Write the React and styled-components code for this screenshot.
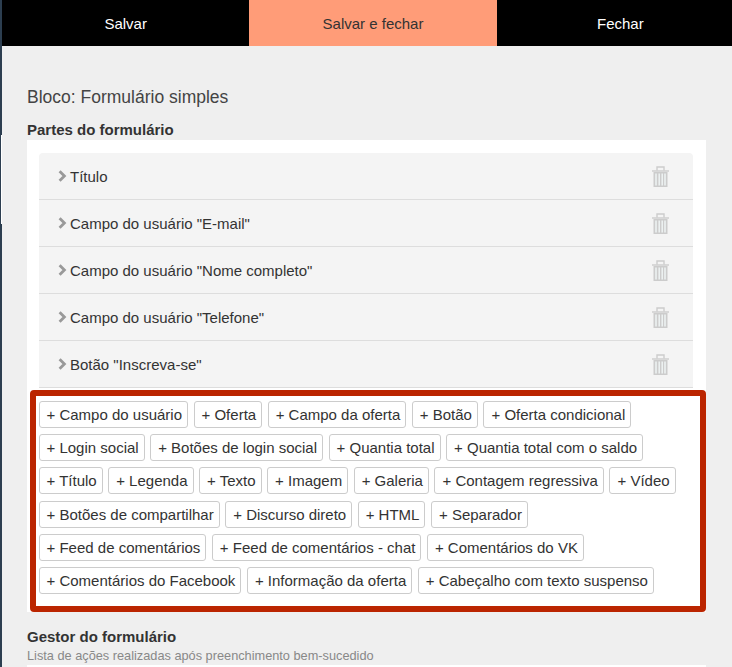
import React from "react";
import styled, { createGlobalStyle } from "styled-components";

const Global = createGlobalStyle`
  html, body { margin: 0; padding: 0; background: #2c3e50; }
  body { font-family: "Liberation Sans", Arial, sans-serif; color: #333; }
  * { box-sizing: border-box; }
`;

const Page = styled.div`
  height: 667px;
  margin-left: 2px;
  width: 730px;
  background: #efefef;
  overflow: hidden;
`;

const EdgeSliver = styled.div`
  position: absolute;
  left: 1px;
  top: 135px;
  width: 1px;
  height: 89px;
  background: #fff;
`;

const TopBar = styled.div`
  display: flex;
  height: 46px;
`;

const TopButton = styled.div`
  flex: 0 0 247.33px;
  display: flex;
  align-items: center;
  justify-content: center;
  font-size: 15px;
  background: ${(p) => (p.$active ? "#ff9c78" : "#000")};
  color: ${(p) => (p.$active ? "#333" : "#fff")};
`;

const Content = styled.div`
  padding: 40px 25px 0;
`;

const Title = styled.h1`
  margin: 0;
  font-size: 17.5px;
  line-height: 22px;
  font-weight: 400;
  color: #444;
`;

const SectionLabel = styled.div`
  font-size: 15px;
  line-height: 20px;
  font-weight: 700;
  color: #333;
  margin-top: ${(p) => p.$top}px;
`;

const Hint = styled.div`
  font-size: 12.75px;
  line-height: 16px;
  margin-top: 1px;
  color: #888;
`;

const Panel = styled.div`
  background: #fff;
  width: 679px;
  padding: 13px 12px 0;
`;

const PartList = styled.div`
  width: 654px;
`;

const Part = styled.div`
  height: 47px;
  display: flex;
  align-items: center;
  background: #f4f4f4;
  padding: 0 24px 0 19px;
  border-bottom: 1px solid #ddd;
  border-radius: ${(p) => (p.$first ? "4px 4px 0 0" : "0")};
  font-size: 15px;
  color: #333;
  gap: 3px;
`;

const PartName = styled.span`
  flex: 1;
`;

const Frame = styled.div`
  width: 676.5px;
  margin: 1.5px 0 0 -9.5px;
  border: 6.5px solid #bb2500;
  border-radius: 4px;
  background: #fff;
  padding: 5px 3px 12px;
  display: flex;
  flex-wrap: wrap;
  gap: 6.4px 5.5px;
`;

const Chip = styled.div`
  height: 27px;
  display: flex;
  align-items: center;
  padding: 0 5px 0 7px;
  border: 1px solid #ccc;
  border-radius: 3px;
  background: #fff;
  font-size: 15px;
  color: #333;
  white-space: nowrap;
`;

const FooterBox = styled.div`
  background: #fff;
  width: 679px;
  height: 4px;
  margin-top: 1px;
`;

const Chevron = () => (
  <svg width="9" height="12" viewBox="0 0 9 12" aria-hidden="true">
    <path d="M1.6 1.2 6.4 6 1.6 10.8" fill="none" stroke="#999" strokeWidth="2.8" />
  </svg>
);

const Trash = () => (
  <svg width="17" height="21" viewBox="0 0 17 21" aria-hidden="true">
    <path d="M0 5h17" stroke="#ccc" strokeWidth="1.4" fill="none" />
    <path d="M5 4.5V1h7v3.5" stroke="#ccc" strokeWidth="1.4" fill="none" />
    <path d="M1.5 6h14v15h-14z" fill="#ccc" />
    <path d="M4 7.5v12M7.2 7.5v12M10.2 7.5v12M13 7.5v12" stroke="#eef3f3" strokeWidth="1.5" />
  </svg>
);

const parts = [
  "Título",
  'Campo do usuário "E-mail"',
  'Campo do usuário "Nome completo"',
  'Campo do usuário "Telefone"',
  'Botão "Inscreva-se"',
];

const chips = [
  "Campo do usuário", "Oferta", "Campo da oferta", "Botão", "Oferta condicional",
  "Login social", "Botões de login social", "Quantia total", "Quantia total com o saldo",
  "Título", "Legenda", "Texto", "Imagem", "Galeria", "Contagem regressiva", "Vídeo",
  "Botões de compartilhar", "Discurso direto", "HTML", "Separador",
  "Feed de comentários", "Feed de comentários - chat", "Comentários do VK",
  "Comentários do Facebook", "Informação da oferta", "Cabeçalho com texto suspenso",
];

export default function App() {
  return (
    <>
      <Global />
      <EdgeSliver />
      <Page>
        <TopBar>
          <TopButton>Salvar</TopButton>
          <TopButton $active>Salvar e fechar</TopButton>
          <TopButton>Fechar</TopButton>
        </TopBar>
        <Content>
          <Title>Bloco: Formulário simples</Title>
          <SectionLabel $top={12}>Partes do formulário</SectionLabel>
          <Panel>
            <PartList>
              {parts.map((t, i) => (
                <Part key={t} $first={i === 0}>
                  <Chevron />
                  <PartName>{t}</PartName>
                  <Trash />
                </Part>
              ))}
            </PartList>
            <Frame>
              {chips.map((c) => (
                <Chip key={c}>+ {c}</Chip>
              ))}
            </Frame>
          </Panel>
          <SectionLabel $top={15}>Gestor do formulário</SectionLabel>
          <Hint>Lista de ações realizadas após preenchimento bem-sucedido</Hint>
          <FooterBox />
        </Content>
      </Page>
    </>
  );
}
